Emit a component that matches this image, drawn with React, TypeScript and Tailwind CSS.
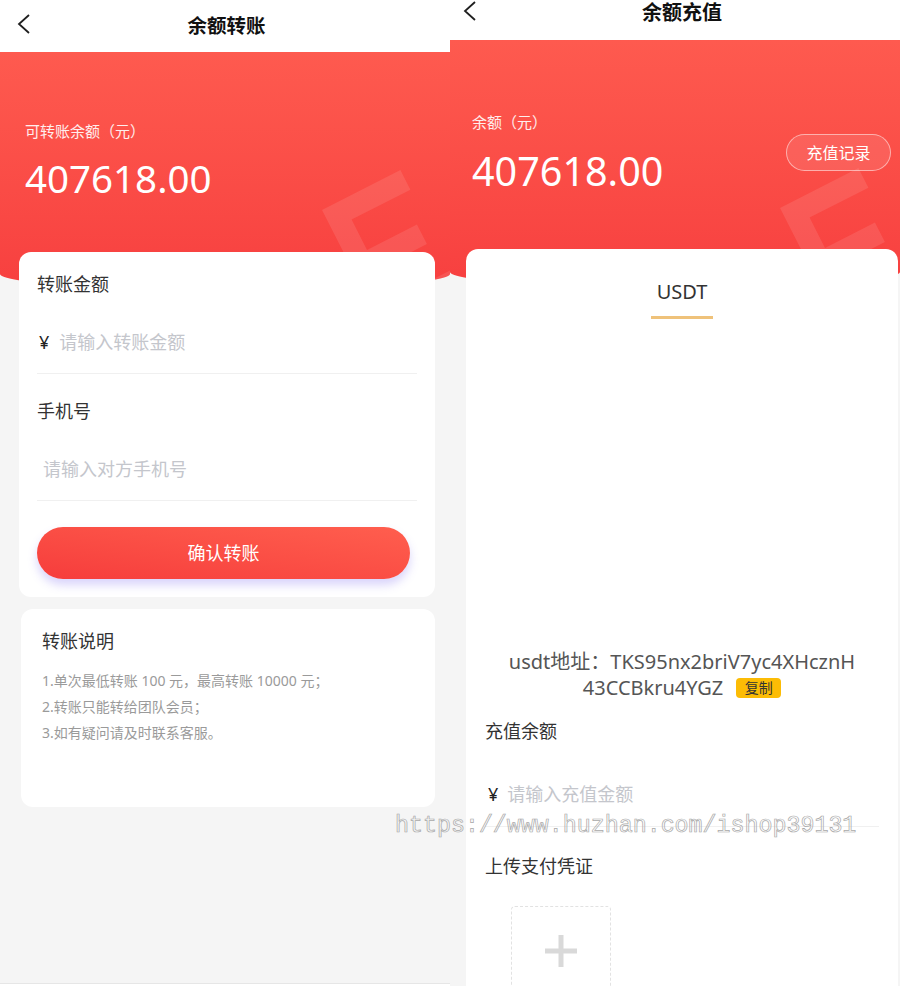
import React from "react";

const font = "font-['Noto_Sans','Noto_Sans_CJK_SC',sans-serif]";

function Back({ className }: { className: string }) {
  return (
    <svg className={className} width="14" height="20" viewBox="0 0 14 20" fill="none">
      <polyline points="12,1 2,10 12,19" stroke="#1f1f1f" strokeWidth="1.8" strokeLinejoin="miter" />
    </svg>
  );
}

// faint rotated "E" drawn on the red banner
function Deco({ className }: { className: string }) {
  return (
    <svg className={className} width="150" height="150" viewBox="0 0 150 150" fill="none">
      <g transform="translate(10 50) rotate(-27)">
        <path d="M0 0 H88 V22 H22 V56 H78 V78 H22 V112 H88 V134 H0 Z" fill="#ffffff" fillOpacity="0.1" />
      </g>
    </svg>
  );
}

function TransferPanel() {
  return (
    <div className="w-[450px] h-[986px] flex flex-col bg-[#f5f5f5] overflow-hidden">
      {/* header */}
      <div className="relative h-[52px] shrink-0 bg-white flex items-center justify-center">
        <Back className="absolute left-[17px] top-[14px]" />
        <span className="ml-[3px] text-[19.5px] font-bold text-[#111]">余额转账</span>
      </div>

      {/* red banner */}
      <div className="relative h-[238px] shrink-0 bg-gradient-to-b from-[#fe5a4f] to-[#f73f3f] rounded-b-[50%_16px] overflow-hidden pl-[25px] pt-[68px]">
        <Deco className="absolute left-[312px] top-[108px]" />
        <div className="text-[15px] leading-[22px] text-white/90">可转账余额（元）</div>
        <div className="mt-[12px] text-[38.5px] leading-[48px] text-white">407618.00</div>
      </div>

      {/* form card */}
      <div className="relative -mt-[38px] ml-[19px] mr-[15px] bg-white rounded-[12px] px-[18px] pt-[20px] pb-[18px]">
        <div className="text-[18px] leading-[24px] text-[#333]">转账金额</div>
        <div className="flex items-center pt-[34px] pb-[19px] border-b border-[#f0f0f0] text-[18px] leading-[24px]">
          <span className="ml-[2px] text-[#222]">¥</span>
          <span className="ml-[10px] text-[#c4c6cc]">请输入转账金额</span>
        </div>
        <div className="mt-[25px] text-[18px] leading-[24px] text-[#333]">手机号</div>
        <div className="pt-[34px] pb-[19px] pl-[6px] border-b border-[#f0f0f0] text-[18px] leading-[24px] text-[#c4c6cc]">
          请输入对方手机号
        </div>
        <button className="mt-[26px] w-[373px] h-[52px] rounded-full bg-gradient-to-bl from-[#ff5e4e] to-[#f63c3c] shadow-[0_6px_10px_rgba(120,100,240,0.28)] text-white text-[18px] flex items-center justify-center">
          确认转账
        </button>
      </div>

      {/* notes card */}
      <div className="mt-[12px] ml-[21px] mr-[15px] h-[198px] bg-white rounded-[12px] pl-[21px] pt-[20px]">
        <div className="text-[18px] leading-[24px] text-[#333]">转账说明</div>
        <div className="mt-[15px] text-[14px] leading-[26px] text-[#9a9a9a]">
          <div>1.单次最低转账 100 元，最高转账 10000 元；</div>
          <div>2.转账只能转给团队会员；</div>
          <div>3.如有疑问请及时联系客服。</div>
        </div>
      </div>

      <div className="flex-1" />
      <div className="h-[3px] shrink-0 border-t border-[#e6e6e6] bg-white" />
    </div>
  );
}

function RechargePanel() {
  return (
    <div className="w-[450px] h-[986px] flex flex-col bg-[#f5f5f5] overflow-hidden">
      {/* header */}
      <div className="relative h-[40px] shrink-0 bg-white flex justify-center pl-[14px]">
        <Back className="absolute left-[13px] top-[1px]" />
        <span className="text-[20px] leading-[26px] font-bold text-[#111]">余额充值</span>
      </div>

      {/* red banner */}
      <div className="relative h-[248px] shrink-0 bg-gradient-to-b from-[#fe5a4f] to-[#f73f3f] rounded-b-[50%_16px] overflow-hidden flex justify-between pl-[22px] pr-[9px] pt-[71px]">
        <Deco className="absolute left-[320px] top-[118px]" />
        <div className="relative">
          <div className="text-[15px] leading-[22px] text-white/90">余额（元）</div>
          <div className="mt-[14px] text-[39.5px] leading-[48px] text-white">407618.00</div>
        </div>
        <div className="relative mt-[23px] w-[105px] h-[37px] rounded-full border border-white/50 bg-white/10 flex items-center justify-center text-[16px] text-white">
          充值记录
        </div>
      </div>

      {/* main card */}
      <div className="relative -mt-[39px] ml-[16px] mr-[2px] flex-1 bg-white rounded-t-[12px] px-[19px] pt-[30px]">
        <div className="flex flex-col items-center">
          <div className="text-[20px] leading-[26px] text-[#333]">USDT</div>
          <div className="mt-[11px] w-[62px] h-[3px] bg-[#efc27a]" />
        </div>

        <div className="mt-[330px] text-center text-[20px] leading-[26px] text-[#555]">
          <div>usdt地址：TKS95nx2briV7yc4XHcznH</div>
          <div className="flex items-center justify-center">
            <span>43CCBkru4YGZ</span>
            <span className="ml-[13px] w-[45px] h-[20px] rounded-[4px] bg-[#fcbc05] text-[14px] leading-[20px] text-[#333]">
              复制
            </span>
          </div>
        </div>

        <div className="mt-[18px] text-[18px] leading-[24px] text-[#333]">充值余额</div>
        <div className="flex items-center pt-[39px] pb-[20px] border-b border-[#f0f0f0] text-[18px] leading-[24px]">
          <span className="ml-[3px] text-[#222]">¥</span>
          <span className="ml-[9px] text-[#c4c6cc]">请输入充值金额</span>
        </div>

        <div className="mt-[27px] text-[18px] leading-[24px] text-[#333]">上传支付凭证</div>
        <div className="mt-[28px] ml-[26px] w-[100px] h-[90px] rounded-[4px] border border-dashed border-[#e2e2e2] flex items-center justify-center">
          <svg width="32" height="32" viewBox="0 0 32 32">
            <rect x="0" y="13.5" width="32" height="5" fill="#d9d9d9" />
            <rect x="13.5" y="0" width="5" height="32" fill="#d9d9d9" />
          </svg>
        </div>
      </div>
    </div>
  );
}

export default function App() {
  return (
    <div className={`relative w-[900px] h-[986px] flex overflow-hidden bg-white ${font}`}>
      <TransferPanel />
      <RechargePanel />
      {/* watermark */}
      <div className="absolute left-[395px] top-[811px] text-[23.3px] leading-[30px] font-['Liberation_Mono',monospace] text-transparent [-webkit-text-stroke:0.7px_#a8a8a8] pointer-events-none whitespace-nowrap">
        https://www.huzhan.com/ishop39131
      </div>
    </div>
  );
}
